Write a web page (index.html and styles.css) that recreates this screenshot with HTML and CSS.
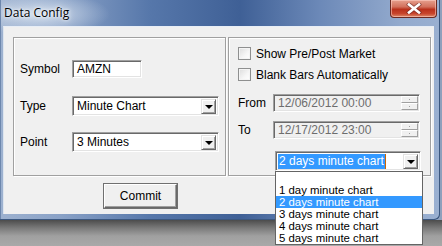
FILE: index.html
```html
<!DOCTYPE html>
<html>
<head>
<meta charset="utf-8">
<link rel="stylesheet" href="styles.css">
</head>
<body>
<div class="screen">
  <div class="window">
    <div class="titlebar">
      <span class="title">Data Config</span>
      <div class="close">
        <svg width="16" height="11" viewBox="0 0 16 11">
          <path d="M3 1.5 L13 9.5 M13 1.5 L3 9.5" stroke="#5a2020" stroke-width="4.2" stroke-linecap="square" opacity="0.55"/>
          <path d="M3 1.5 L13 9.5 M13 1.5 L3 9.5" stroke="#ffffff" stroke-width="2.6" stroke-linecap="square"/>
        </svg>
      </div>
    </div>
    <div class="client">
      <div class="groups">
        <div class="group group-left">
          <div class="row row-symbol">
            <span class="lbl">Symbol</span>
            <div class="edit edit-symbol">AMZN</div>
          </div>
          <div class="row row-type">
            <span class="lbl">Type</span>
            <div class="combo combo-wide"><span class="val">Minute Chart</span><span class="drop"><i class="tri"></i></span></div>
          </div>
          <div class="row row-point">
            <span class="lbl">Point</span>
            <div class="combo combo-wide"><span class="val">3 Minutes</span><span class="drop"><i class="tri"></i></span></div>
          </div>
        </div>
        <div class="group group-right">
          <div class="check check-1"><span class="box"></span><span>Show Pre/Post Market</span></div>
          <div class="check check-2"><span class="box"></span><span>Blank Bars Automatically</span></div>
          <div class="frow frow-from">
            <span class="flbl">From</span>
            <div class="edit date"><span class="dval">12/06/2012 00:00</span><span class="spin"><i></i><i></i></span></div>
          </div>
          <div class="frow frow-to">
            <span class="flbl">To</span>
            <div class="edit date"><span class="dval">12/17/2012 23:00</span><span class="spin"><i></i><i></i></span></div>
          </div>
          <div class="combo-wrap">
            <div class="combo combo-chart"><span class="val"><span class="sel">2 days minute chart</span><span class="caret"></span></span><span class="drop"><i class="tri"></i></span></div>
            <ul class="list">
              <li>1 day minute chart</li>
              <li class="hl">2 days minute chart</li>
              <li>3 days minute chart</li>
              <li>4 days minute chart</li>
              <li>5 days minute chart</li>
            </ul>
          </div>
        </div>
      </div>
      <div class="actions">
        <div class="btn">Commit</div>
      </div>
    </div>
  </div>
  <div class="shadow"></div>
</div>
</body>
</html>
```

FILE: styles.css
```css
* { box-sizing: border-box; }
html, body { margin: 0; padding: 0; }
body {
  width: 442px;
  height: 246px;
  overflow: hidden;
  font-family: "Liberation Sans", Arial, sans-serif;
  font-size: 12px;
  color: #000;
}
.screen {
  width: 442px;
  height: 246px;
  background: #8ea0bc;
}
.window {
  width: 440px;
  height: 220px;
  background:
    radial-gradient(ellipse 70px 22px at 40px 14px, rgba(220,230,242,0.85), rgba(220,230,242,0) 100%),
    linear-gradient(to right, #9db1cf 0, #8aa2c7 60px, #5677aa 150px, #3f6096 240px, #6c89b8 320px, #93aacd 400px, #9ab0d1 440px);
  border-bottom-right-radius: 5px;
  box-shadow: inset -1px -1px 0 #3b577f, inset 1px 0 0 #6d87ad;
  display: flex;
  flex-direction: column;
}
.titlebar {
  height: 26px;
  display: flex;
  justify-content: space-between;
  align-items: flex-start;
}
.title {
  font-family: "Open Sans", "Noto Sans", sans-serif;
  font-size: 12px;
  padding: 5px 0 0 4px;
  line-height: 16px;
  color: #000;
  text-shadow: 0 0 6px #fff, 0 0 3px #fff;
}
.close {
  width: 47px;
  height: 18px;
  margin-right: 3px;
  border: 1px solid #6b2a22;
  border-top: none;
  border-radius: 0 0 4px 4px;
  background: linear-gradient(to bottom, #e6a08e 0, #d2705c 40%, #b9301b 55%, #c8452c 80%, #dc8a6a 100%);
  box-shadow: inset 0 0 0 1px rgba(255,210,200,0.55);
  display: flex;
  align-items: center;
  justify-content: center;
}
.client {
  margin-left: 3px;
  width: 431px;
  height: 188px;
  background: #f0f0f0;
  border-top: 1px solid #e8eef6;
  border-left: 1px solid #dde5ee;
  padding: 10px 0 0 9px;
  display: flex;
  flex-direction: column;
}
.groups {
  display: flex;
  gap: 2px;
}
.group {
  height: 139px;
  border: 1px solid #a0a0a0;
  box-shadow: 1px 1px 0 #fff, inset 1px 1px 0 #fff;
  position: relative;
}
.group-left {
  width: 213px;
  padding: 0 0 0 6px;
  display: flex;
  flex-direction: column;
}
.group-right {
  width: 203px;
  padding: 9px 0 0 9px;
  display: flex;
  flex-direction: column;
}
.row {
  display: flex;
  align-items: center;
  height: 20px;
}
.row-symbol { margin-top: 21px; }
.row-type { margin-top: 17px; }
.row-point { margin-top: 16px; }
.lbl {
  width: 52px;
  flex: none;
}
.edit {
  height: 18px;
  border-top: 1px solid #a0a0a0;
  border-left: 1px solid #a0a0a0;
  border-right: 1px solid #fff;
  border-bottom: 1px solid #fff;
  box-shadow: inset 1px 1px 0 #696969, inset -1px -1px 0 #e3e3e3;
  background: #fff;
  line-height: 16px;
}
.edit-symbol {
  width: 70px;
  padding-left: 4px;
}
.combo {
  height: 20px;
  border-top: 1px solid #a0a0a0;
  border-left: 1px solid #a0a0a0;
  border-right: 1px solid #fff;
  border-bottom: 1px solid #fff;
  box-shadow: inset 1px 1px 0 #696969, inset -1px -1px 0 #e3e3e3;
  background: #fff;
  display: flex;
  align-items: center;
  padding: 2px 2px 2px 2px;
}
.combo-wide { width: 147px; }
.combo .val {
  flex: 1;
  padding-left: 2px;
  line-height: 15px;
  display: flex;
  align-items: center;
}
.drop {
  width: 15px;
  height: 15px;
  flex: none;
  background: #f0f0f0;
  border-top: 1px solid #e3e3e3;
  border-left: 1px solid #e3e3e3;
  border-right: 1px solid #696969;
  border-bottom: 1px solid #696969;
  box-shadow: inset 1px 1px 0 #fff, inset -1px -1px 0 #a0a0a0;
  display: flex;
  align-items: center;
  justify-content: center;
}
.tri {
  width: 0;
  height: 0;
  border-left: 4px solid transparent;
  border-right: 4px solid transparent;
  border-top: 4px solid #000;
  margin-top: 1px;
}
.check {
  display: flex;
  align-items: center;
  height: 13px;
}
.check-2 { margin-top: 8px; }
.box {
  width: 13px;
  height: 13px;
  flex: none;
  border: 1px solid #8e8f8f;
  background: linear-gradient(135deg, #dcdcdc 0, #f6f6f6 60%, #fff 100%);
  box-shadow: inset 0 0 0 1px #f4f4f4;
  margin-right: 5px;
}
.frow {
  display: flex;
  align-items: center;
  height: 18px;
}
.frow-from { margin-top: 13px; }
.frow-to { margin-top: 9px; }
.flbl {
  width: 35px;
  flex: none;
}
.date {
  width: 147px;
  background: #f0f0f0;
  color: #6d6d6d;
  display: flex;
  align-items: center;
  padding: 0 1px 0 4px;
}
.dval { flex: 1; }
.spin {
  width: 17px;
  height: 14px;
  display: flex;
  flex-direction: column;
}
.spin i {
  flex: 1;
  background: #f0f0f0;
  border-top: 1px solid #fff;
  border-left: 1px solid #fff;
  border-right: 1px solid #a0a0a0;
  border-bottom: 1px solid #a0a0a0;
  position: relative;
}
.spin i::after {
  content: "";
  position: absolute;
  left: 7px;
  top: 2px;
  width: 1px;
  height: 1px;
  background: #a0a0a0;
}
.combo-wrap {
  position: relative;
  margin: 12px 0 0 37px;
  width: 146px;
}
.combo-chart { width: 146px; }
.combo-chart .val { padding-left: 0; }
.sel {
  background: #3399ff;
  color: #fff;
  padding: 0 1px;
  line-height: 15px;
}
.caret {
  width: 1px;
  height: 15px;
  background: #cc6600;
}
.list {
  position: absolute;
  left: 0;
  top: 100%;
  width: 148px;
  height: 74px;
  margin: 0;
  padding: 12px 0 0 0;
  list-style: none;
  background: #fff;
  border: 1px solid #646464;
  z-index: 5;
  font-size: 11.4px;
}
.list li {
  height: 12px;
  line-height: 12px;
  padding-left: 3px;
  white-space: nowrap;
}
.list li.hl {
  background: #3399ff;
  color: #fff;
}
.actions {
  margin-top: 8px;
  padding-left: 91px;
}
.btn {
  width: 73px;
  height: 24px;
  border-top: 1px solid #fff;
  border-left: 1px solid #fff;
  border-right: 1px solid #696969;
  border-bottom: 1px solid #696969;
  box-shadow: 0 0 0 1px #707070, inset -1px -1px 0 #a0a0a0;
  background: #f0f0f0;
  display: flex;
  align-items: center;
  justify-content: center;
}
.shadow {
  height: 26px;
  background: linear-gradient(to bottom, #4c4c4c 0, #7a7a7a 8px, #a0a0a0 16px, #a9a9a9 26px);
}
```
